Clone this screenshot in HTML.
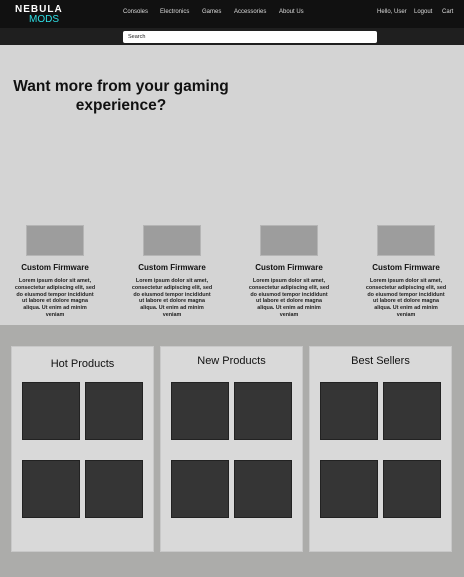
<!DOCTYPE html>
<html><head><style>
*{margin:0;padding:0;box-sizing:border-box}
body{width:464px;height:577px;overflow:hidden;font-family:"Liberation Sans",sans-serif;background:#acacaa;position:relative}
.a{position:absolute}
.nav{top:0;left:0;width:464px;height:28px;background:#111}
.sb{top:28px;left:0;width:464px;height:17px;background:#1f1f1f}
.nv{color:#ddd;font-size:6px;top:9px}
.main{top:45px;left:0;width:464px;height:280px;background:#d4d4d4}
.ft{width:118px;text-align:center}
.box{width:58px;height:31px;background:#9d9d9d;margin:0 auto;border:1px solid #b5b5b5}
.ft h3{font-size:8px;margin-top:7px;color:#111}
.ft p{font-size:5.4px;font-weight:bold;line-height:6.8px;margin:6px auto 0;width:118px;color:#222;white-space:nowrap}
.pn{width:143px;height:206px;background:#d9d9d9;border:1px solid #c8c8c8;top:346px}
.pn h2{font-weight:normal;font-size:11px;text-align:center;color:#111;position:absolute;left:0;width:100%}
.sq{position:absolute;width:58px;height:58px;background:#353535;border:1px solid #222}
</style></head><body>
<div class="a nav"></div>
<div class="a" style="left:15px;top:4px;color:#fff;font-size:10px;font-weight:bold;letter-spacing:1px">NEBULA</div>
<div class="a" style="left:29px;top:14px;color:#2ee0e6;font-size:10px">MODS</div>
<div class="a nv" style="left:123px">Consoles</div>
<div class="a nv" style="left:160px">Electronics</div>
<div class="a nv" style="left:202px">Games</div>
<div class="a nv" style="left:234px">Accessories</div>
<div class="a nv" style="left:279px">About Us</div>
<div class="a nv" style="left:377px">Hello, User</div>
<div class="a nv" style="left:414px">Logout</div>
<div class="a nv" style="left:442px">Cart</div>
<div class="a sb"></div>
<div class="a" style="left:123px;top:31px;width:254px;height:12px;background:#fff;border-radius:2px;font-size:5.5px;padding:3px 5px;color:#222">Search</div>
<div class="a main"></div>
<div class="a" style="left:5px;top:77px;width:232px;text-align:center;font-size:15.5px;font-weight:bold;line-height:19px;color:#111">Want more from your gaming experience?</div>
<div class="a ft" style="left:-4px;top:225px"><div class="box"></div><h3>Custom Firmware</h3><p>Lorem ipsum dolor sit amet,<br>consectetur adipiscing elit, sed<br>do eiusmod tempor incididunt<br>ut labore et dolore magna<br>aliqua. Ut enim ad minim<br>veniam</p></div>
<div class="a ft" style="left:113px;top:225px"><div class="box"></div><h3>Custom Firmware</h3><p>Lorem ipsum dolor sit amet,<br>consectetur adipiscing elit, sed<br>do eiusmod tempor incididunt<br>ut labore et dolore magna<br>aliqua. Ut enim ad minim<br>veniam</p></div>
<div class="a ft" style="left:230px;top:225px"><div class="box"></div><h3>Custom Firmware</h3><p>Lorem ipsum dolor sit amet,<br>consectetur adipiscing elit, sed<br>do eiusmod tempor incididunt<br>ut labore et dolore magna<br>aliqua. Ut enim ad minim<br>veniam</p></div>
<div class="a ft" style="left:347px;top:225px"><div class="box"></div><h3>Custom Firmware</h3><p>Lorem ipsum dolor sit amet,<br>consectetur adipiscing elit, sed<br>do eiusmod tempor incididunt<br>ut labore et dolore magna<br>aliqua. Ut enim ad minim<br>veniam</p></div>
<div class="a pn" style="left:11px"><h2 style="top:11px">Hot Products</h2>
<div class="sq" style="left:10px;top:35px"></div><div class="sq" style="left:73px;top:35px"></div><div class="sq" style="left:10px;top:113px"></div><div class="sq" style="left:73px;top:113px"></div></div>
<div class="a pn" style="left:160px"><h2 style="top:8px">New Products</h2>
<div class="sq" style="left:10px;top:35px"></div><div class="sq" style="left:73px;top:35px"></div><div class="sq" style="left:10px;top:113px"></div><div class="sq" style="left:73px;top:113px"></div></div>
<div class="a pn" style="left:309px"><h2 style="top:8px">Best Sellers</h2>
<div class="sq" style="left:10px;top:35px"></div><div class="sq" style="left:73px;top:35px"></div><div class="sq" style="left:10px;top:113px"></div><div class="sq" style="left:73px;top:113px"></div></div>
</body></html>
